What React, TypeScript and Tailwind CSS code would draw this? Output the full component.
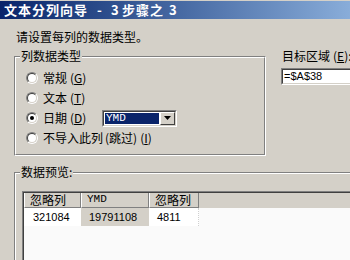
import React from 'react'

const cjk = "font-['Noto_Sans_CJK_SC','Noto_Sans',sans-serif]"
const sans = "font-['Liberation_Sans',Arial,sans-serif]"
const mono = "font-['Liberation_Mono','Courier_New',monospace]"

function GroupBox({ label, className, children }: any) {
  return (
    <div className={`relative pt-[7px] ${className}`}>
      <div className="h-full border border-t-[#808080] border-l-[#808080] border-b-white border-r-white">
        <div className="h-full border border-t-white border-l-white border-b-[#808080] border-r-[#808080]">
          {children}
        </div>
      </div>
      <span className={`absolute left-[6px] top-0 bg-[#d4d0c8] px-[1px] text-[12px] leading-[14px] text-black ${cjk}`}>
        {label}
      </span>
    </div>
  )
}

function Radio({ checked }: { checked?: boolean }) {
  return (
    <div className="w-[12px] h-[12px] rounded-full border border-t-[#808080] border-l-[#808080] border-b-white border-r-white shrink-0">
      <div className="w-full h-full rounded-full border border-t-[#404040] border-l-[#404040] border-b-[#d4d0c8] border-r-[#d4d0c8] bg-white flex items-center justify-center">
        {checked && <div className="w-[4px] h-[4px] rounded-full bg-black" />}
      </div>
    </div>
  )
}

function Key({ k }: { k: string }) {
  return (
    <span className="ml-[3px]">
      (<span className="underline underline-offset-[1px]">{k}</span>)
    </span>
  )
}

function Sunken({ className, children }: any) {
  return (
    <div className={`border border-t-[#808080] border-l-[#808080] border-b-white border-r-white ${className}`}>
      <div className="h-full border border-t-[#404040] border-l-[#404040] border-b-[#d4d0c8] border-r-[#d4d0c8] bg-white flex">
        {children}
      </div>
    </div>
  )
}

export default function App() {
  return (
    <div className={`w-[350px] h-[260px] overflow-hidden bg-[#d4d0c8] pt-[1px] text-black ${cjk}`}>
      {/* title bar */}
      <div className="w-[420px] h-[18px] bg-linear-to-r from-[#0a246a] to-[#a6caf0] flex items-center pl-[4px] text-white font-bold text-[13px] leading-[18px]">
        <span className="w-[93px] tracking-[1px]">文本分列向导</span>
        <span className="w-[14px]">-</span>
        <span className="w-[11px]">3</span>
        <span className="w-[47px] tracking-[1px]">步骤之</span>
        <span>3</span>
      </div>

      <div className="pl-[14px]">
        <div className="mt-[11px] pl-[2px] text-[12px] leading-[14px]">请设置每列的数据类型。</div>

        <div className="flex mt-[5px]">
          <GroupBox label="列数据类型" className="w-[252px] h-[107px] shrink-0">
            <div className="pt-[10px] pl-[10px] text-[12px] leading-[14px]">
              <div className="flex items-center h-[20px] gap-[5px]">
                <Radio />
                <span>常规<Key k="G" /></span>
              </div>
              <div className="flex items-center h-[20px] gap-[5px]">
                <Radio />
                <span>文本<Key k="T" /></span>
              </div>
              <div className="flex items-center h-[20px] gap-[5px]">
                <Radio checked />
                <span className="w-[54px]">日期<Key k="D" /></span>
                <Sunken className="w-[75px] h-[17px]">
                  <div className="flex-1 p-[1px]">
                    <div className={`h-full bg-[#0a246a] text-white text-[11px] leading-[11px] pl-[1px] ${mono}`}>YMD</div>
                  </div>
                  <div className="w-[15px] h-full bg-[#d4d0c8] border border-t-white border-l-white border-b-[#404040] border-r-[#404040] flex items-center justify-center">
                    <svg width="7" height="4" viewBox="0 0 7 4"><path d="M0 0h7L3.5 4z" fill="#000" /></svg>
                  </div>
                </Sunken>
              </div>
              <div className="flex items-center h-[20px] gap-[5px]">
                <Radio />
                <span>不导入此列<span className="ml-[2px]">(跳过)</span><Key k="I" /></span>
              </div>
            </div>
          </GroupBox>

          <div className="ml-[15px] shrink-0">
            <div className="pl-[1px] text-[12px] leading-[14px]">目标区域<Key k="E" />:</div>
            <Sunken className="mt-[5px] w-[100px] h-[17px]">
              <span className={`pl-[1px] text-[11px] leading-[13px] ${sans}`}>=$A$38</span>
            </Sunken>
          </div>
        </div>

        <GroupBox label="数据预览:" className="mt-[9px] w-[400px] h-[150px]">
          <div className="pt-[17px] pl-[6px]">
            <div className="border border-t-[#808080] border-l-[#808080] border-b-white border-r-white">
              <div className="border border-t-[#404040] border-l-[#404040] border-b-[#d4d0c8] border-r-[#d4d0c8] bg-[#fafafa] h-[80px]">
                <div className="flex h-[15px] bg-[#d4d0c8] text-[12px] leading-[13px]">
                  <div className="w-[57px] border-l border-white border-r border-r-[#808080] border-b border-b-[#808080] pl-[5px]">忽略列</div>
                  <div className={`w-[68px] border-l border-white border-r border-r-[#808080] border-b border-b-[#808080] pl-[5px] text-[11px] ${mono}`}>YMD</div>
                  <div className="w-[50px] border-l border-white border-r border-r-[#808080] border-b border-b-[#808080] pl-[5px]">忽略列</div>
                </div>
                <div className={`flex h-[18px] items-stretch text-[11px] leading-[18px] ${sans}`}>
                  <div className="w-[57px] pl-[9px] bg-white">321084</div>
                  <div className="w-[68px] pl-[8px] bg-[#d4d0c8]">19791108</div>
                  <div className="w-[50px] pl-[8px] bg-white border-r border-dotted border-[#d0d0d0]">4811</div>
                </div>
              </div>
            </div>
          </div>
        </GroupBox>
      </div>
    </div>
  )
}
